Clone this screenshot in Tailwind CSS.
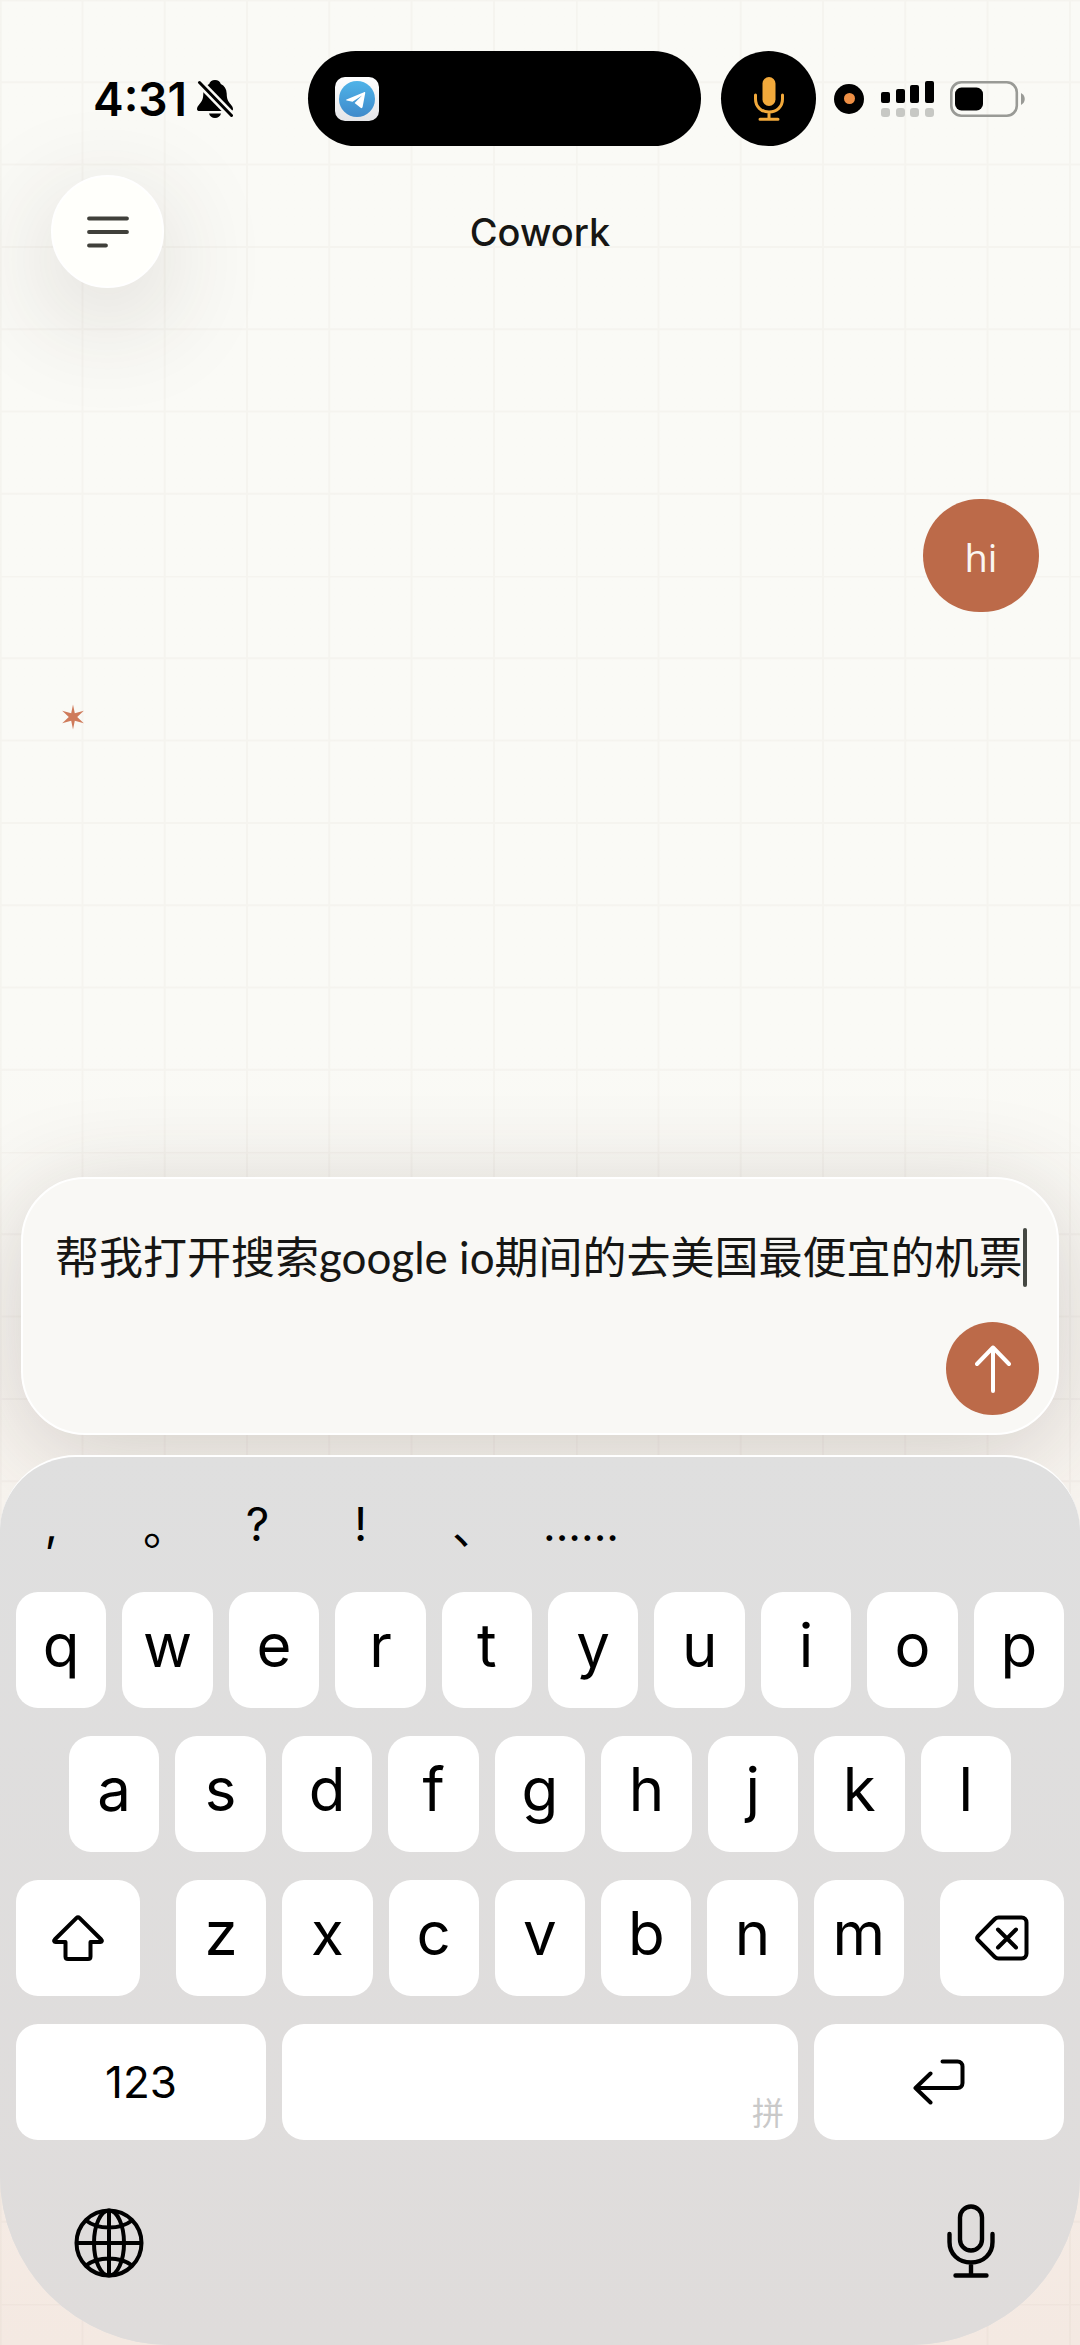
<!DOCTYPE html>
<html lang="zh-CN">
<head>
    <meta charset="UTF-8">
    <meta name="viewport" content="width=device-width, initial-scale=1.0">
    <title>Cowork</title>
    <script src="https://cdn.jsdelivr.net/npm/@tailwindcss/browser@4"></script>
</head>
<body class="relative isolate flex min-h-screen flex-col overflow-x-hidden bg-[#fafaf6] bg-linear-to-b from-[#fafaf6] from-45% to-[#f4e9e2] to-100% font-['Inter','Noto_Sans_CJK_SC',sans-serif] text-black antialiased">

    <!-- Grid paper background -->
    <svg class="absolute inset-0 -z-10 h-full w-full" aria-hidden="true">
        <defs>
            <pattern id="grid" width="576" height="576" patternUnits="userSpaceOnUse">
                <path d="M.8 0V576M82.500 0V576M164.800 0V576M247 0V576M329.300 0V576M411.600 0V576M494 0V576M0 .5H576M0 82.300H576M0 164.600H576M0 247H576M0 329.200H576M0 411.500H576M0 493.800H576" stroke="#785a50" stroke-opacity=".04" stroke-width="2"/>
            </pattern>
        </defs>
        <rect width="100%" height="100%" fill="url(#grid)"/>
    </svg>

    <!-- Status bar -->
    <div class="flex items-center pt-[51px] pr-[55px] pl-[93px]">
        <div class="flex flex-1 items-center gap-2.5">
            <span class="text-[46px] leading-none font-semibold">4:31</span>
            <svg class="h-10 w-9" viewBox="0 0 36 40" aria-label="Silent">
                <path d="M18 1c-3 0-5 1.500-5.800 4C8.500 6.800 6.500 10 6.300 14.500 6.200 20 5.200 22 2.200 25.500.8 27.200 0 28.500 0 30c0 1.400 1 2 2.400 2h31.200c1.400 0 2.400-.6 2.400-2 0-1.500-.8-2.800-2.200-4.500-3-3.500-4-5.500-4.100-11C29.500 10 27.500 6.800 23.800 5 23 2.500 21 1 18 1zM12 34.500h12c-.8 2.800-3 4.500-6 4.500s-5.200-1.700-6-4.500z"/>
                <path d="M2.500 3.500L34 36" stroke="#fafaf6" stroke-width="8"/>
                <path d="M2.500 3.500L34.500 36.500" stroke="#000" stroke-width="3" stroke-linecap="round"/>
            </svg>
        </div>
        <div class="flex h-[95px] w-[393px] items-center rounded-full bg-black pl-[27px]">
            <svg class="size-11" viewBox="0 0 44 44" aria-label="Telegram">
                <defs>
                    <linearGradient id="tg" x1="0" y1="0" x2="0" y2="1">
                        <stop offset="0" stop-color="#4fb3e8"/>
                        <stop offset="1" stop-color="#3f8acb"/>
                    </linearGradient>
                    <linearGradient id="tgbg" x1="0" y1="0" x2="0" y2="1">
                        <stop offset="0" stop-color="#fff"/>
                        <stop offset="1" stop-color="#e4e5e8"/>
                    </linearGradient>
                </defs>
                <rect width="44" height="44" rx="10" fill="url(#tgbg)"/>
                <circle cx="22" cy="22" r="18" fill="url(#tg)"/>
                <path d="M11.500 22.500L29 15.200c.9-.3 1.400.1 1.200 1.100l-2.600 13.700c-.3 1.200-1.100 1.400-2 .8l-6-4.800L27 18.500l-9.500 6.200-5.800-1.200c-.8-.2-.8-.7-.2-1z" fill="#fff"/>
            </svg>
        </div>
        <div class="ml-5 flex size-[95px] items-center justify-center rounded-full bg-black">
            <svg class="h-11 w-8" viewBox="0 0 32 44" fill="none" stroke="#f2a93b" stroke-width="3" stroke-linecap="round" aria-label="Microphone in use">
                <rect x="9.500" y="0" width="13" height="29" rx="6.500" fill="#f2a93b" stroke="none"/>
                <path d="M2.500 18v4c0 7.500 5.500 13 13.500 13s13.500-5.500 13.500-13v-4M16 35v7M7 42.300h18"/>
            </svg>
        </div>
        <div class="ml-[18px] flex size-[30px] items-center justify-center rounded-full bg-black">
            <div class="size-[11px] rounded-full bg-[#ee8f45]"></div>
        </div>
        <svg class="ml-[17px] h-9 w-[53px]" viewBox="0 0 53 36" aria-label="Signal">
            <g fill="#000">
                <rect x="0" y="11" width="9" height="11" rx="2"/>
                <rect x="15" y="8" width="9" height="14" rx="2"/>
                <rect x="29" y="4" width="9" height="18" rx="2"/>
                <rect x="44" y="0" width="9" height="22" rx="2"/>
            </g>
            <g fill="#c7c8c4">
                <rect x="0" y="27" width="9" height="9" rx="3"/>
                <rect x="15" y="27" width="9" height="9" rx="3"/>
                <rect x="29" y="27" width="9" height="9" rx="3"/>
                <rect x="44" y="27" width="9" height="9" rx="3"/>
            </g>
        </svg>
        <svg class="ml-4 h-9 w-[75px]" viewBox="0 0 75 36" aria-label="Battery">
            <rect x="1.300" y="1.300" width="65.500" height="33.400" rx="10" fill="none" stroke="#999a96" stroke-width="2.600"/>
            <rect x="5" y="6.500" width="28" height="23" rx="6.500"/>
            <path d="M71 12c5 2.500 5 9.500 0 12z" fill="#999a96"/>
        </svg>
    </div>

    <!-- App header -->
    <header class="mt-[29px] grid grid-cols-3 items-center px-[51px]">
        <button type="button" aria-label="Menu" class="flex size-[113px] items-center justify-center rounded-full border-2 border-white bg-[#fffffb] shadow-[0_28px_110px_rgba(60,45,40,0.18)]">
            <svg class="h-8 w-[42px]" viewBox="0 0 42 32" stroke="#40403a" stroke-width="3.800" stroke-linecap="round">
                <path d="M2 2.500h38M2 16h38M2 29.500h17"/>
            </svg>
        </button>
        <h1 class="text-center text-[38px] leading-none font-medium text-[#161614]">Cowork</h1>
    </header>

    <!-- Conversation -->
    <main class="flex flex-1 flex-col px-[41px] pt-[211px]">
        <p class="flex h-[113px] min-w-[116px] items-center justify-center self-end rounded-full bg-[#bc6a49] px-10 pt-1 font-['Open_Sans',sans-serif] text-[38px] text-[#faf6f2]">hi</p>
        <svg class="mt-[92px] ml-5 h-[26px] w-6" viewBox="-12 -13 24 26" fill="#cf7b5b" aria-label="Thinking">
            <path d="M0-12.500L1.800-3.800 10.800-6.200 4.200 0 10.800 6.200 1.800 3.800 0 12.500-1.800 3.800-10.800 6.200-4.200 0-10.800-6.200-1.800-3.800z"/>
        </svg>
    </main>

    <!-- Composer -->
    <form class="mx-[21px] mb-5 flex h-[258px] flex-col justify-between rounded-[64px] border-2 border-white bg-[#f9f8f5] pt-12 pb-[18px] shadow-[0_16px_100px_rgba(60,45,40,0.2)]">
        <div class="flex items-center pl-8">
            <textarea aria-label="Message" rows="1" class="field-sizing-content h-[60px] resize-none overflow-hidden font-['Lato','Noto_Sans_CJK_SC',sans-serif] text-[44px] leading-[60px] whitespace-pre text-[#161614] outline-none">帮我打开搜索google io期间的去美国最便宜的机票</textarea>
            <span class="h-[59px] w-1 rounded-full bg-[#454842]"></span>
        </div>
        <button type="button" aria-label="Send" class="mr-[18px] flex size-[93px] items-center justify-center self-end rounded-full bg-[#bc6a49]">
            <svg class="h-12 w-9" viewBox="0 0 36 48" fill="none" stroke="#fff" stroke-width="4" stroke-linecap="round" stroke-linejoin="round">
                <path d="M18 46V2.500M2 19L18 2.500 34 19"/>
            </svg>
        </button>
    </form>

    <!-- Keyboard -->
    <section class="flex h-[890px] flex-col rounded-t-[76px] rounded-b-[170px] border-t-2 border-white bg-[#dfdfdf] bg-linear-to-b from-[#dfdfdf] to-[#dfdcdb] px-4">
        <div class="-ml-4 flex h-[135px] items-center text-[46px]">
            <button type="button" class="w-[103px]">,</button>
            <button type="button" class="w-[103px] font-['Noto_Sans_CJK_SC',sans-serif] [font-feature-settings:'halt']">。</button>
            <button type="button" class="w-[103px]">?</button>
            <button type="button" class="w-[103px]">!</button>
            <button type="button" class="w-[103px] font-['Noto_Sans_CJK_SC',sans-serif] [font-feature-settings:'halt']">、</button>
            <button type="button" class="w-[132px] text-[44px]">......</button>
        </div>
        <div class="flex flex-col gap-7">
            <div class="flex gap-4" data-keys="qwertyuiop"></div>
            <div class="flex gap-4 px-[53px]" data-keys="asdfghjkl"></div>
            <div class="flex gap-9">
                <button type="button" aria-label="Shift" class="flex h-[116px] w-[124px] items-center justify-center rounded-[22px] bg-white">
                    <svg class="h-[46px] w-[52px]" viewBox="0 0 52 46" fill="none" stroke="#000" stroke-width="4" stroke-linejoin="round">
                        <path d="M24.600 2.800c.8-.8 2-.8 2.800 0L49.200 24.500c1.200 1.300.6 2.500-.8 2.500H38.500v14.500c0 1.600-.9 2.500-2.500 2.500H16c-1.600 0-2.500-.9-2.500-2.500V27H3.600c-1.400 0-2-1.200-.8-2.500z"/>
                    </svg>
                </button>
                <div class="flex flex-1 gap-4" data-keys="zxcvbnm"></div>
                <button type="button" aria-label="Delete" class="flex h-[116px] w-[124px] items-center justify-center rounded-[22px] bg-white">
                    <svg class="h-[46px] w-[54px]" viewBox="0 0 54 46" fill="none" stroke="#000" stroke-width="4" stroke-linecap="round" stroke-linejoin="round">
                        <path d="M23.500 2.500H46.500c3 0 5 2 5 5v31c0 3-2 5-5 5H23.500c-1.500 0-2.700-.5-3.700-1.500L3.200 25.200c-1.300-1.400-1.300-3 0-4.400L19.800 4c1-1 2.200-1.500 3.700-1.500zM23 14.500L41 32.500M41 14.500L23 32.500"/>
                    </svg>
                </button>
            </div>
            <div class="flex gap-4">
                <button type="button" class="h-[116px] w-[250px] rounded-[22px] bg-white text-[44px]">123</button>
                <button type="button" aria-label="Space" class="flex h-[116px] flex-1 items-end justify-end rounded-[22px] bg-white px-3.5 pb-2.5 text-[32px] leading-none text-[#c9c9c9]">拼</button>
                <button type="button" aria-label="Return" class="flex h-[116px] w-[250px] items-center justify-center rounded-[22px] bg-white">
                    <svg class="h-[46px] w-[52px]" viewBox="0 0 52 46" fill="none" stroke="#000" stroke-width="4" stroke-linecap="round" stroke-linejoin="round">
                        <path d="M29.500 2.500H44.500c3 0 5 2 5 5v16.500c0 3-2 5-5 5H2.500M17.500 14.500L2.500 29 17.500 43.500"/>
                    </svg>
                </button>
            </div>
        </div>
        <div class="flex flex-1 items-center justify-between px-[58px]">
            <button type="button" aria-label="Next keyboard">
                <svg class="size-[70px]" viewBox="-35 -35 70 70" fill="none" stroke="#000" stroke-width="4">
                    <circle r="32.500"/>
                    <ellipse rx="15" ry="32.500"/>
                    <path d="M0-32.500V32.500M-32.500 0H32.500M-23-22.500Q-14-15.500 0-15.500T23-22.500M-23 22.500Q-14 15.500 0 15.500T23 22.500"/>
                </svg>
            </button>
            <button type="button" aria-label="Dictate" class="px-2.5 pb-1">
                <svg class="h-[74px] w-[50px]" viewBox="0 0 50 74" fill="none" stroke="#000" stroke-width="4.400" stroke-linecap="round">
                    <rect x="14" y="2.500" width="22" height="44" rx="11"/>
                    <path d="M3.500 30v8c0 12 9 20.500 21.500 20.500S46.500 50 46.500 38v-8M25 58.500v13M9.500 71.500h31"/>
                </svg>
            </button>
        </div>
    </section>

    <script>
        // Fill every letter row from its data-keys string
        document.querySelectorAll('[data-keys]').forEach(row => {
            for (const letter of row.dataset.keys) {
                const key = document.createElement('button');
                key.type = 'button';
                key.className = 'h-[116px] flex-1 rounded-[22px] bg-white pb-2.5 text-[60px] leading-none';
                key.textContent = letter;
                row.appendChild(key);
            }
        });
    </script>
</body>
</html>
